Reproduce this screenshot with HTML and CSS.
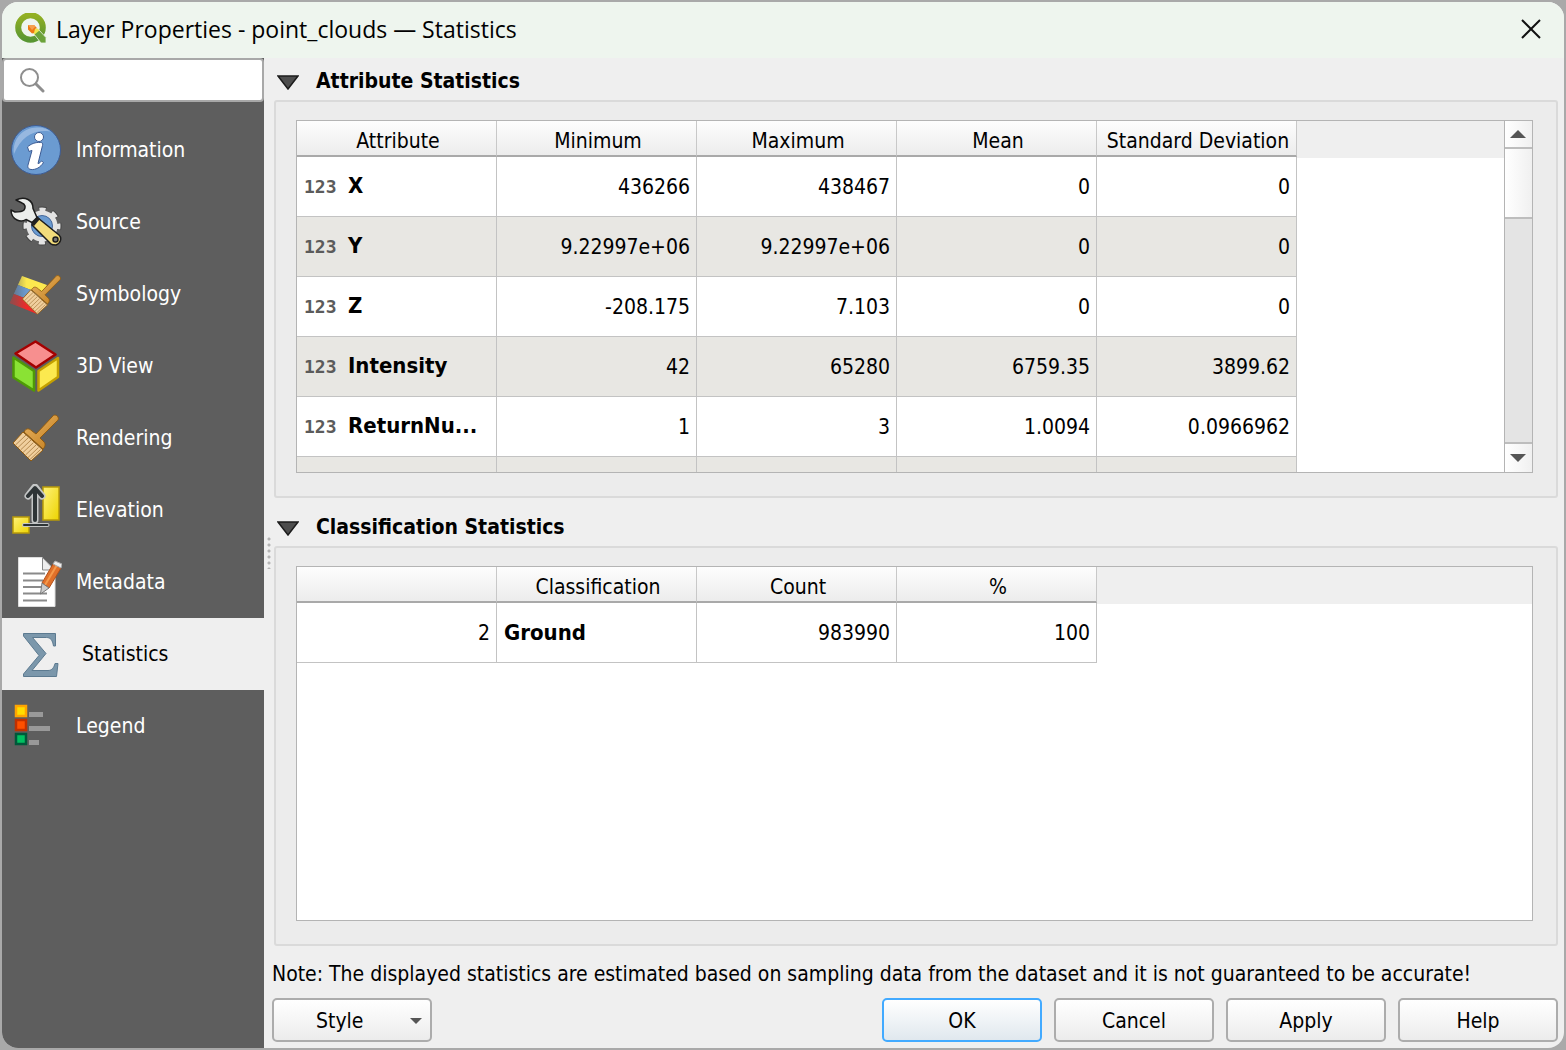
FILE: index.html
```html
<!DOCTYPE html>
<html lang="en">
<head>
<meta charset="utf-8">
<title>Layer Properties</title>
<link rel="stylesheet" href="styles.css">
</head>
<body>
<div class="dialog">
  <header class="titlebar">
    <svg class="app-logo" viewBox="0 0 32 32" aria-hidden="true">
      <defs><linearGradient id="logo" x1="0" y1="0" x2="0" y2="1"><stop offset="0" stop-color="#93b023"/><stop offset="1" stop-color="#589632"/></linearGradient></defs>
      <circle cx="15.500" cy="14.500" r="12.300" fill="none" stroke="url(#logo)" stroke-width="6"/>
      <path d="M18.500 20.500l5-4 7.500 8v5.500h-5z" fill="#6ba23a" stroke="#eef5ee" stroke-width=".8"/>
      <path d="M19 16l3.500-.5 2 2-5 4-1.500-2z" fill="#f0e64a"/>
      <path d="M13 12h6l3 3-2 1-1 4-2 .500-4-4z" fill="#ee7913"/>
      <path d="M13 12h6l1.500 1.500L17 17z" fill="#f5a04e"/>
    </svg>
    <h1 class="title">Layer Properties - point_clouds — Statistics</h1>
    <button class="close" type="button" aria-label="Close">
      <svg viewBox="0 0 20 20" width="20" height="20"><path d="M1 1l18 18M19 1L1 19" stroke="#111" stroke-width="2" fill="none"/></svg>
    </button>
  </header>
  <div class="body">
    <aside class="sidebar">
      <div class="search">
        <svg viewBox="0 0 26 26" width="26" height="26" aria-hidden="true"><circle cx="10.500" cy="10.500" r="8.500" fill="none" stroke="#8e8e8e" stroke-width="2"/><path d="M17 17l7 7" stroke="#8e8e8e" stroke-width="3" stroke-linecap="round"/></svg>
        <input type="search" aria-label="Search">
      </div>
      <nav class="nav">
        <a href="#information"><svg viewBox="0 0 52 52" aria-hidden="true">
          <circle cx="26" cy="26" r="24.500" fill="#6b9bd1" stroke="#3d5c94"/>
          <path d="M4 30C2 14 14 3 28 3.500c6 0 10 2 12 4C24 5 11 13 4 30z" fill="#a5c2e4" opacity=".75"/>
          <circle cx="29" cy="13" r="4.500" fill="#fff" stroke="#3d5c94"/>
          <path d="M17.500 23c3-3 8-5 13-4.500 2 0 2.500 1 2 3L28 39.500c1.500 0 2.500-1.500 3.500-2.500l2 1.500c-3 5-8 7.500-12.500 7-3-.5-3.500-2.500-3-4.500L22 26.500c-1 0-2 .5-3 1z" fill="#fff" stroke="#3d5c94"/>
        </svg>Information</a>
        <a href="#source"><svg viewBox="0 0 52 52" aria-hidden="true">
          <circle cx="32" cy="30" r="17" fill="none" stroke="#444" stroke-width="5" stroke-dasharray="7.400 5.950" stroke-dashoffset="3.700"/>
          <circle cx="32" cy="30" r="16.500" fill="none" stroke="#e3e3e3" stroke-width="4" stroke-dasharray="6.200 6.760" stroke-dashoffset="3.100"/>
          <circle cx="32" cy="30" r="13" fill="#6b9bd1" stroke="#e3e3e3" stroke-width="5"/>
          <circle cx="32" cy="30" r="10.500" fill="#6b9bd1" stroke="#47699b"/>
          <path d="M28 22l21 17c3 3 2 8-3 10-2 0-4 0-5-1L22 29z" fill="#f2dc7b" stroke="#1c1c1c" stroke-width="1.500"/>
          <path d="M21 28l6-8 3 3-6 7z" fill="#222"/>
          <path d="M6 4c4-2 9-2 12-.5 4 2 5 5 5 9l4 9-5 5-6-3c-3 2-6 2-9 .5-4-2-6-6-6-10l4 2c4 0 7 0 9-2 2-3 1-6-2-7z" fill="#eceeec" stroke="#1c1c1c" stroke-width="1.500" stroke-linejoin="round"/>
          <circle cx="45.500" cy="43.500" r="2.500" fill="#777" stroke="#1c1c1c" stroke-width="1.500"/>
        </svg>Source</a>
        <a href="#symbology"><svg viewBox="0 0 52 52" aria-hidden="true">
          <defs>
            <linearGradient id="fade" x1="0" y1="0" x2="1" y2="0"><stop offset="0" stop-color="#5e5e5e" stop-opacity=".7"/><stop offset=".45" stop-color="#5e5e5e" stop-opacity="0"/></linearGradient>
            <linearGradient id="wood" x1="0" y1="0" x2="1" y2="1"><stop offset="0" stop-color="#e9b566"/><stop offset="1" stop-color="#c27c1a"/></linearGradient>
            <g id="brush" stroke="#8f5a10" stroke-linejoin="round">
              <path d="M15 20c2-4 5-4 8-1l4 3L43 5c2-3 5-2 6 0s0 3-1 4L31 26l4 4c2 2 1 5-1 7z" fill="url(#wood)"/>
              <path d="M14 20L34 38 22 49 4 31z" fill="#f0cf9e"/>
              <path d="M6.500 33L17 23M9 35.500L19.500 25.500M11.500 38L22 28M14 40.500L24.500 30.500M16.500 43L27 33M19 45.500L29.500 35.500M21 47.500L31.500 37.500" fill="none" stroke="#b58a50"/>
            </g>
          </defs>
          <path d="M12 8l25 9-3 10L8 17z" fill="#fce94f"/><path d="M8 17l26 10-4 9L4 26z" fill="#6b9bd1"/><path d="M4 26l26 10-3 10L0 35z" fill="#ef2929"/>
          <path d="M12 8l25 9-10 29L0 35z" fill="url(#fade)"/>
          <use href="#brush" transform="translate(9 5) scale(.84)"/>
        </svg>Symbology</a>
        <a href="#view3d"><svg viewBox="0 0 52 52" aria-hidden="true" stroke-linejoin="round" stroke-width="2.500">
          <path d="M25.500 1.500L45.500 14.500 26 27.500 5.500 13.500z" fill="#f78f8f" stroke="#a40000"/>
          <path d="M3.500 17.500L24 31v19.500L3.500 37.500z" fill="#8ae234" stroke="#4e9a06"/>
          <path d="M28.500 31L48 18v19L28.500 50.500z" fill="#fce94f" stroke="#c4a000"/>
        </svg>3D View</a>
        <a href="#rendering"><svg viewBox="0 0 52 52" aria-hidden="true"><use href="#brush" transform="translate(-1 0)"/></svg>Rendering</a>
        <a href="#elevation"><svg viewBox="0 0 52 52" aria-hidden="true">
          <defs><linearGradient id="gold" x1="0" y1="0" x2="1" y2="1"><stop offset="0" stop-color="#fff27a"/><stop offset="1" stop-color="#edd400"/></linearGradient></defs>
          <rect x="33" y="3" width="16" height="33" fill="url(#gold)" stroke="#b89a08" stroke-width="1.500"/>
          <rect x="3" y="33" width="16" height="16" fill="url(#gold)" stroke="#b89a08" stroke-width="1.500"/>
          <g fill="none" stroke-linecap="round" stroke-linejoin="round">
            <path d="M14 41h23.500" stroke="#c4c6c6" stroke-width="4"/>
            <path d="M25 36V5M18 12l7-9 7 9" stroke="#c4c6c6" stroke-width="7"/>
            <path d="M25 36V5M18 12l7-8 7 8" stroke="#2e3436" stroke-width="4"/>
            <path d="M14 41h23.500" stroke="#2e3436" stroke-width="2"/>
          </g>
        </svg>Elevation</a>
        <a href="#metadata"><svg viewBox="0 0 52 52" aria-hidden="true">
          <path d="M8.500 1.500h24l12.500 13v36H8.500z" fill="#fff" stroke="#ddd"/>
          <path d="M32.500 1.500v12.500h12z" fill="#eee" stroke="#888"/>
          <path d="M13 17.500h22M13 24.500h20M13 31h18M13 37.500h24M13 44.500h24" stroke="#8a8a8a" stroke-width="2"/>
          <path d="M32 27L43 8l8 4-12 20z" fill="#e0702a" stroke="#b0501a"/>
          <path d="M35 29L47 9" stroke="#f59a4c" stroke-width="2"/>
          <path d="M43 8l2-3 7 3-1 4z" fill="#eee" stroke="#aaa"/>
          <path d="M32 27l7 5-8.500 6z" fill="#ccc" stroke="#777"/>
        </svg>Metadata</a>
        <a href="#statistics" class="current" aria-current="page"><svg viewBox="0 0 52 52" aria-hidden="true">
          <path d="M7.500 5.500h32V18H37.500c-1-6-3-8.500-7-8.500H16.500L30 25.500 16 42.500h16c4 0 6-3 7-7h3L40.500 48.500h-33V46L23 27.500 7.500 8z" fill="#7b97ab" stroke="#5c7a90"/>
        </svg>Statistics</a>
        <a href="#legend"><svg viewBox="0 0 52 52" aria-hidden="true">
          <rect x="6" y="6" width="10" height="10" fill="#ffde00" stroke="#ffa500" stroke-width="2.500"/>
          <rect x="6" y="20" width="10" height="10" fill="#ff5000" stroke="#c03000" stroke-width="2.500"/>
          <rect x="6" y="34" width="10" height="10" fill="#00c060" stroke="#00583a" stroke-width="2.500"/>
          <path d="M19 14.500h14M19 28.500h21M19 42.500h10" stroke="#999" stroke-width="5"/>
        </svg>Legend</a>
      </nav>
    </aside>
    <div class="splitter"></div>
    <main class="content">
      <section class="group">
        <h2><button type="button" class="toggle" aria-expanded="true"><svg viewBox="0 0 22 15" aria-hidden="true"><path d="M1 1h20L11 14z" fill="#4d4d4d" stroke="#1c1c1c" stroke-width="1.500"/></svg>Attribute Statistics</button></h2>
        <div class="panel">
          <div class="view">
            <div class="pane">
              <div class="head-strip"></div>
              <table>
                <thead><tr><th>Attribute</th><th>Minimum</th><th>Maximum</th><th>Mean</th><th>Standard Deviation</th></tr></thead>
                <tbody>
                  <tr><th scope="row"><span class="type">123</span>X</th><td>436266</td><td>438467</td><td>0</td><td>0</td></tr>
                  <tr><th scope="row"><span class="type">123</span>Y</th><td>9.22997e+06</td><td>9.22997e+06</td><td>0</td><td>0</td></tr>
                  <tr><th scope="row"><span class="type">123</span>Z</th><td>-208.175</td><td>7.103</td><td>0</td><td>0</td></tr>
                  <tr><th scope="row"><span class="type">123</span>Intensity</th><td>42</td><td>65280</td><td>6759.35</td><td>3899.62</td></tr>
                  <tr><th scope="row"><span class="type">123</span>ReturnNu...</th><td>1</td><td>3</td><td>1.0094</td><td>0.0966962</td></tr>
                  <tr><th scope="row"></th><td></td><td></td><td></td><td></td></tr>
                </tbody>
              </table>
            </div>
            <div class="scrollbar">
              <button type="button" aria-label="Scroll up"><svg viewBox="0 0 16 8" width="16" height="8"><path d="M0 8L8 0l8 8z" fill="#555"/></svg></button>
              <div class="track"><div class="thumb"></div></div>
              <button type="button" class="down" aria-label="Scroll down"><svg viewBox="0 0 16 8" width="16" height="8"><path d="M0 0h16L8 8z" fill="#555"/></svg></button>
            </div>
          </div>
        </div>
      </section>
      <section class="group">
        <h2><button type="button" class="toggle" aria-expanded="true"><svg viewBox="0 0 22 15" aria-hidden="true"><path d="M1 1h20L11 14z" fill="#4d4d4d" stroke="#1c1c1c" stroke-width="1.500"/></svg>Classification Statistics</button></h2>
        <div class="panel">
          <div class="view">
            <div class="pane">
              <div class="head-strip"></div>
              <table>
                <thead><tr><th></th><th>Classification</th><th>Count</th><th>%</th></tr></thead>
                <tbody><tr><td>2</td><th scope="row">Ground</th><td>983990</td><td>100</td></tr></tbody>
              </table>
            </div>
          </div>
        </div>
      </section>
      <p class="note">Note: The displayed statistics are estimated based on sampling data from the dataset and it is not guaranteed to be accurate!</p>
      <footer class="actions">
        <button type="button" class="btn style-btn">Style<svg viewBox="0 0 12 6" width="12" height="6" aria-hidden="true"><path d="M0 0h12L6 6z" fill="#555"/></svg></button>
        <button type="button" class="btn primary">OK</button>
        <button type="button" class="btn">Cancel</button>
        <button type="button" class="btn">Apply</button>
        <button type="button" class="btn">Help</button>
      </footer>
    </main>
  </div>
</div>
</body>
</html>
```
FILE: styles.css
```css
* { box-sizing: border-box; }

body {
  margin: 0;
  padding: 2px;
  height: 100vh;
  background: #a9a9a9;
  color: #000;
  font: 21px/28px "DejaVu Sans Condensed", "DejaVu Sans", sans-serif;
  font-stretch: condensed;
}

button {
  font: inherit;
  color: inherit;
  border: 0;
  padding: 0;
  background: none;
}

.dialog {
  display: flex;
  flex-direction: column;
  height: 100%;
  overflow: hidden;
  border-radius: 16px;
  background: #efefef;
}

.titlebar {
  display: flex;
  align-items: center;
  height: 56px;
  padding: 0 23px 2px 13px;
  background: #eef5ee;
}

.app-logo { width: 32px; height: 32px; }

.title {
  flex: 1;
  margin: 0 0 0 9px;
  font: 400 23px/30px "Open Sans", "Noto Sans", sans-serif;
}

.close { display: flex; }

.body {
  flex: 1;
  display: flex;
  min-height: 0;
}

.sidebar {
  width: 262px;
  background: #5e5e5e;
}

.search {
  display: flex;
  align-items: center;
  height: 44px;
  padding-left: 15px;
  background: #fff;
  border: 2px solid #a8a8a8;
  border-radius: 4px;
}

.search input {
  flex: 1;
  min-width: 0;
  height: 36px;
  border: 0;
  outline: 0;
  background: none;
  font: inherit;
}

.nav { padding-top: 12px; }

.nav a {
  display: flex;
  align-items: center;
  gap: 14px;
  height: 72px;
  padding-left: 8px;
  color: #fff;
  line-height: 30px;
  text-decoration: none;
}

.nav svg { width: 52px; height: 52px; }

.nav .current {
  padding-left: 14px;
  background: #efefef;
  color: #000;
}

.splitter {
  align-self: center;
  width: 8px;
  height: 32px;
  background: radial-gradient(circle at 5px 2px, #b4b4b4 1px, transparent 2px) 0 0 / 8px 6px;
}

.content {
  flex: 1;
  display: flex;
  flex-direction: column;
  min-width: 0;
  padding: 2px 6px 6px 0;
}

.group {
  flex: 1 1 0;
  display: flex;
  flex-direction: column;
  min-height: 0;
  padding-left: 2px;
}

.group + .group {
  flex-basis: 2px;
  margin-top: 8px;
}

.group h2 { margin: 0; font-size: 21px; }

.toggle {
  display: flex;
  align-items: center;
  gap: 17px;
  height: 40px;
  padding: 2px 0 0 3px;
  font-weight: 700;
}

.toggle svg { width: 22px; height: 15px; margin-top: 2px; }

.panel {
  flex: 1;
  display: flex;
  min-height: 0;
  padding: 18px 23px 23px 20px;
  background: #ececec;
  border: 2px solid #dadada;
  border-radius: 3px;
}

.view {
  flex: 1;
  display: flex;
  min-width: 0;
  background: #fff;
  border: 1px solid #b4b4b4;
}

.pane {
  flex: 1;
  display: grid;
  min-width: 0;
  overflow: hidden;
  align-content: start;
}

.head-strip, .pane table { grid-area: 1 / 1; }
.head-strip { height: 37px; background: #efefef; }

table {
  justify-self: start;
  table-layout: fixed;
  width: 0;
  border-collapse: separate;
  border-spacing: 0;
}

thead th {
  width: 200px;
  height: 36px;
  padding: 6px 0 0 3px;
  font-weight: 400;
  white-space: nowrap;
  background: linear-gradient(#fdfdfd, #ececec);
  border-right: 1px solid #c8c8c8;
  border-bottom: 2px solid #a9a9a9;
}

tbody th, tbody td {
  height: 60px;
  padding: 0 6px 0 7px;
  background: #fff;
  border-right: 1px solid #c3c3c3;
  border-bottom: 1px solid #c3c3c3;
  white-space: nowrap;
}

tbody th { text-align: left; font-size: 22px; }
tbody td { text-align: right; }
tbody tr:nth-child(even) > * { background: #e8e7e3; }

.type {
  display: inline-block;
  width: 44px;
  color: #5b5b5b;
  font: 700 18px/28px "DejaVu Sans Mono", monospace;
}

.scrollbar {
  display: flex;
  flex-direction: column;
  width: 28px;
  border-left: 1px solid #b4b4b4;
  background: #e4e4e4;
}

.scrollbar button {
  display: grid;
  place-items: center;
  height: 28px;
  padding-right: 1px;
  background: linear-gradient(90deg, #fff, #f0f0f0);
  border-bottom: 2px solid #bdbdbd;
}

.scrollbar .down {
  height: 30px;
  border-top: 2px solid #bdbdbd;
  border-bottom: 0;
}

.track { flex: 1; }

.thumb {
  height: 24%;
  background: linear-gradient(90deg, #fff, #f0f0f0);
  border-bottom: 2px solid #bdbdbd;
}

.note { margin: 14px 0 10px; }

.actions {
  display: flex;
  gap: 12px;
}

.btn {
  width: 160px;
  height: 44px;
  padding-top: 2px;
  background: linear-gradient(#fff, #ececec);
  border: 2px solid #acacac;
  border-radius: 5px;
}

.style-btn {
  display: flex;
  align-items: center;
  justify-content: space-between;
  margin-right: auto;
  padding: 2px 8px 0 42px;
}

.primary {
  background: linear-gradient(#fff, #e0e8ee);
  border-color: #42aaff;
}
```
